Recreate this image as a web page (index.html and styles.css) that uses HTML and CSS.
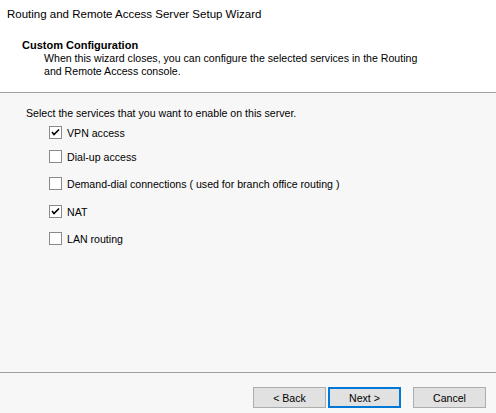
FILE: index.html
```html
<!DOCTYPE html>
<html>
<head>
<meta charset="utf-8">
<link rel="stylesheet" href="styles.css">
</head>
<body>
<div class="window">
  <div class="header">
    <div class="title">Routing and Remote Access Server Setup Wizard</div>
    <div class="heading">Custom Configuration</div>
    <div class="desc">When this wizard closes, you can configure the selected services in the Routing<br>and Remote Access console.</div>
  </div>
  <div class="content">
    <div class="prompt">Select the services that you want to enable on this server.</div>
    <div class="opts">
      <div class="opt r1"><span class="box"><svg width="9" height="9" viewBox="0 0 9 9"><path d="M1 4 L3 6.5 L8 1.5" fill="none" stroke="#000" stroke-width="1.6"/></svg></span><span>VPN access</span></div>
      <div class="opt r2"><span class="box"></span><span>Dial-up access</span></div>
      <div class="opt r3"><span class="box"></span><span>Demand-dial connections ( used for branch office routing )</span></div>
      <div class="opt r4"><span class="box"><svg width="9" height="9" viewBox="0 0 9 9"><path d="M1 4 L3 6.5 L8 1.5" fill="none" stroke="#000" stroke-width="1.6"/></svg></span><span>NAT</span></div>
      <div class="opt r5"><span class="box"></span><span>LAN routing</span></div>
    </div>
  </div>
  <div class="footer">
    <button class="btn">&lt; Back</button>
    <button class="btn default">Next &gt;</button>
    <button class="btn cancel">Cancel</button>
  </div>
</div>
</body>
</html>
```
FILE: styles.css
```css
html, body {
  margin: 0;
  padding: 0;
  width: 496px;
  height: 413px;
  overflow: hidden;
  background: #f7f7f7;
  font-family: "Liberation Sans", Arial, sans-serif;
  font-size: 10.6px;
  color: #000;
}
.window {
  display: flex;
  flex-direction: column;
  height: 413px;
}
.header {
  background: #fff;
  height: 93px;
  box-sizing: border-box;
  border-bottom: 1px solid #a0a0a0;
  padding: 7px 0 0 7px;
}
.title {
  font-size: 11.5px;
  line-height: 14px;
}
.heading {
  font-weight: bold;
  font-size: 11px;
  line-height: 13px;
  margin: 18px 0 0 15px;
}
.desc {
  margin: 0 0 0 37px;
  line-height: 13px;
}
.content {
  height: 280px;
  box-sizing: border-box;
  border-bottom: 1px solid #a0a0a0;
  padding: 14px 0 0 26px;
}
.prompt {
  line-height: 13px;
}
.opts {
  display: flex;
  flex-direction: column;
  margin-left: 23px;
  margin-top: 6px;
}
.opt {
  display: flex;
  align-items: center;
  height: 13px;
  gap: 5px;
}
.r2 { margin-top: 11px; }
.r3 { margin-top: 14px; }
.r4 { margin-top: 15px; }
.r5 { margin-top: 14px; }
.box {
  width: 13px;
  height: 13px;
  box-sizing: border-box;
  border: 1px solid #8a8a8a;
  background: #fff;
  display: flex;
  align-items: center;
  justify-content: center;
}
.box svg { display: block; }
.footer {
  flex: 1;
  display: flex;
  align-items: flex-start;
  padding: 14px 0 0 253px;
}
.btn {
  width: 73px;
  height: 21px;
  box-sizing: border-box;
  background: #e1e1e1;
  border: 1px solid #adadad;
  font-family: "Liberation Sans", Arial, sans-serif;
  font-size: 10.6px;
  color: #000;
  padding: 0;
  margin: 0;
}
.btn.default {
  border: 2px solid #0078d7;
  margin-left: 2px;
}
.btn.cancel {
  margin-left: 12px;
}
```
